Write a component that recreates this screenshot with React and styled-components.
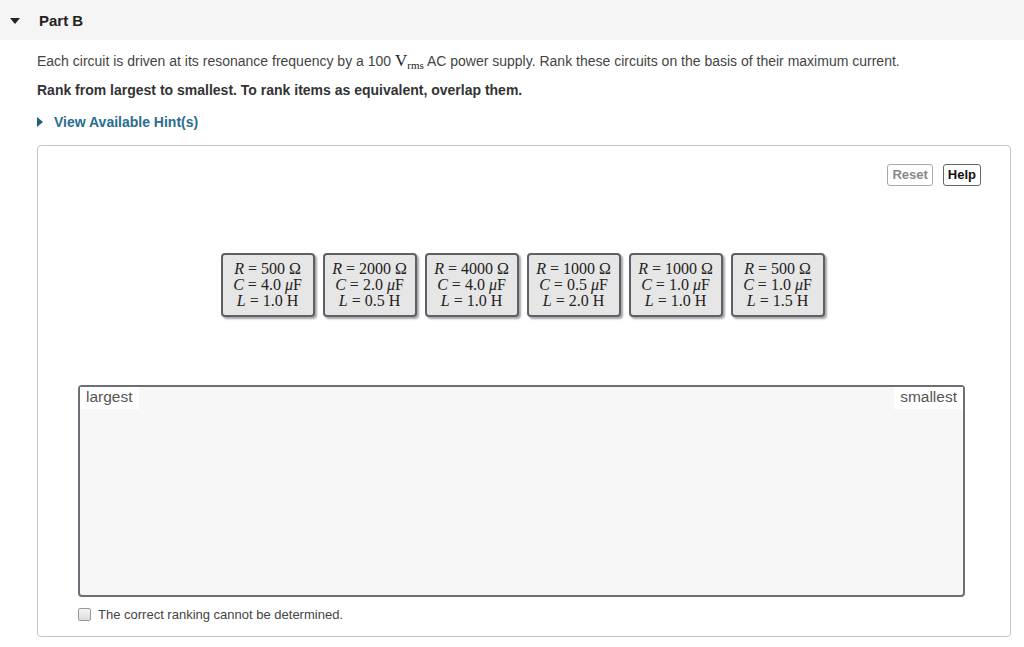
import React from "react";
import styled, { createGlobalStyle } from "styled-components";

const Global = createGlobalStyle`
  body {
    margin: 0;
    background: #fff;
    font-family: "Liberation Sans", Arial, sans-serif;
    color: #333;
  }
`;

const Header = styled.div`
  height: 40px;
  background: #f5f5f5;
  display: flex;
  align-items: center;
  padding-left: 10px;
  gap: 19px;
`;

const Caret = styled.span`
  width: 0;
  height: 0;
  border-left: 5px solid transparent;
  border-right: 5px solid transparent;
  border-top: 6px solid #222;
  margin-top: 1px;
`;

const PartTitle = styled.h2`
  margin: 0;
  font-size: 15px;
  font-weight: bold;
  color: #222;
`;

const Body = styled.div`
  padding: 11px 14px 0 37px;
`;

const Intro = styled.p`
  margin: 0;
  font-size: 14px;
  line-height: 20px;
  color: #444;
`;

const Math = styled.span`
  font-family: "Liberation Serif", "DejaVu Serif", serif;
  font-size: 17px;
  color: #222;
`;

const Sub = styled.sub`
  font-size: 11px;
  vertical-align: -3px;
`;

const Instruction = styled.p`
  margin: 5px 0 0;
  font-size: 14px;
  font-weight: bold;
  line-height: 20px;
  color: #333;
`;

const Hint = styled.a`
  display: flex;
  align-items: center;
  gap: 11px;
  margin-top: 12px;
  font-size: 14px;
  font-weight: bold;
  line-height: 20px;
  color: #2a6d8f;
  text-decoration: none;
`;

const HintCaret = styled.span`
  width: 0;
  height: 0;
  border-top: 5px solid transparent;
  border-bottom: 5px solid transparent;
  border-left: 6px solid #245d78;
`;

const Panel = styled.div`
  margin-top: 13px;
  width: 974px;
  height: 492px;
  box-sizing: border-box;
  border: 1px solid #c4c4c4;
  border-radius: 4px;
  display: flex;
  flex-direction: column;
  padding: 18px 29px 0 40px;
`;

const Toolbar = styled.div`
  display: flex;
  justify-content: flex-end;
  gap: 10px;
`;

const Button = styled.button`
  font-family: "Liberation Sans", Arial, sans-serif;
  font-size: 13px;
  font-weight: bold;
  color: ${(p) => (p.$muted ? "#888" : "#111")};
  background: #fff;
  border: 1px solid ${(p) => (p.$muted ? "#aaa" : "#666")};
  border-radius: 3px;
  height: 22px;
  padding: 0 4px;
  line-height: 18px;
`;

const Cards = styled.div`
  display: flex;
  justify-content: center;
  gap: 8px;
  margin-top: 67px;
  padding-right: 14px;
`;

const Card = styled.div`
  width: 94px;
  height: 64px;
  box-sizing: border-box;
  background: #e6e6e6;
  border: 2px solid #5f5f67;
  border-radius: 4px;
  box-shadow: 2px 2px 2px rgba(0, 0, 0, 0.35);
  display: flex;
  flex-direction: column;
  align-items: center;
  justify-content: center;
  font-family: "Liberation Serif", "DejaVu Serif", serif;
  font-size: 16px;
  line-height: 16px;
  color: #222;
`;

const Var = styled.i`
  font-style: italic;
`;

const RankBox = styled.div`
  margin-top: 68px;
  width: 887px;
  height: 212px;
  box-sizing: border-box;
  border: 2px solid #6e6e76;
  border-radius: 4px;
  background: #f7f7f7;
  display: flex;
  justify-content: space-between;
  align-items: flex-start;
`;

const Label = styled.span`
  background: #fff;
  font-size: 15.5px;
  color: #555;
  padding: 1px 6px 3px;
`;

const CheckRow = styled.label`
  display: flex;
  align-items: center;
  gap: 7px;
  margin-top: 10px;
  font-size: 13px;
  color: #444;
`;

const Box = styled.span`
  width: 11px;
  height: 11px;
  border: 1px solid #999;
  border-radius: 2px;
  background: linear-gradient(#f4f4f4, #dcdcdc);
`;

const circuits = [
  { r: "500", c: "4.0", l: "1.0" },
  { r: "2000", c: "2.0", l: "0.5" },
  { r: "4000", c: "4.0", l: "1.0" },
  { r: "1000", c: "0.5", l: "2.0" },
  { r: "1000", c: "1.0", l: "1.0" },
  { r: "500", c: "1.0", l: "1.5" },
];

function App() {
  return (
    <>
      <Global />
      <Header>
        <Caret />
        <PartTitle>Part B</PartTitle>
      </Header>
      <Body>
        <Intro>
          Each circuit is driven at its resonance frequency by a 100{" "}
          <Math>
            V<Sub>rms</Sub>
          </Math>{" "}
          AC power supply. Rank these circuits on the basis of their maximum
          current.
        </Intro>
        <Instruction>
          Rank from largest to smallest. To rank items as equivalent, overlap
          them.
        </Instruction>
        <Hint href="#">
          <HintCaret />
          View Available Hint(s)
        </Hint>
        <Panel>
          <Toolbar>
            <Button $muted>Reset</Button>
            <Button>Help</Button>
          </Toolbar>
          <Cards>
            {circuits.map((x, i) => (
              <Card key={i}>
                <span>
                  <Var>R</Var> = {x.r} Ω
                </span>
                <span>
                  <Var>C</Var> = {x.c} <Var>μ</Var>F
                </span>
                <span>
                  <Var>L</Var> = {x.l} H
                </span>
              </Card>
            ))}
          </Cards>
          <RankBox>
            <Label>largest</Label>
            <Label>smallest</Label>
          </RankBox>
          <CheckRow>
            <Box />
            The correct ranking cannot be determined.
          </CheckRow>
        </Panel>
      </Body>
    </>
  );
}

export default App;
